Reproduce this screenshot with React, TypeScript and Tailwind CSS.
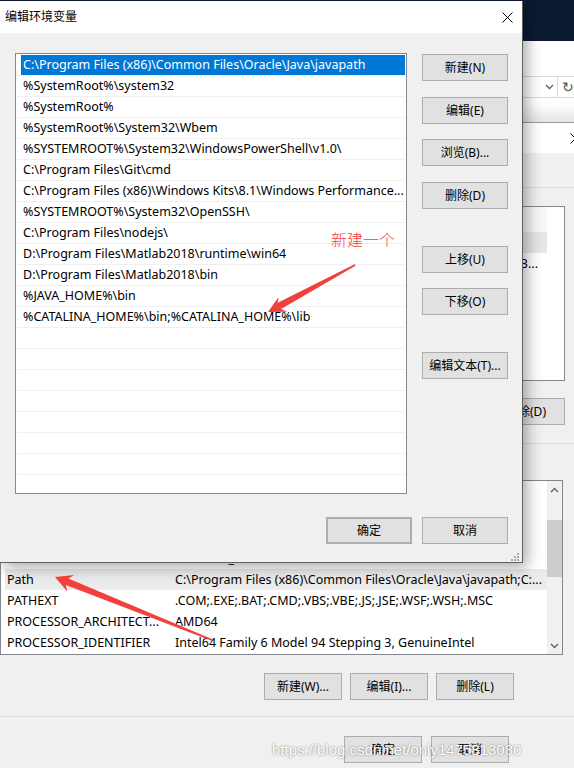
import React from 'react';

const pathItems = [
  'C:\\Program Files (x86)\\Common Files\\Oracle\\Java\\javapath',
  '%SystemRoot%\\system32',
  '%SystemRoot%',
  '%SystemRoot%\\System32\\Wbem',
  '%SYSTEMROOT%\\System32\\WindowsPowerShell\\v1.0\\',
  'C:\\Program Files\\Git\\cmd',
  'C:\\Program Files (x86)\\Windows Kits\\8.1\\Windows Performance...',
  '%SYSTEMROOT%\\System32\\OpenSSH\\',
  'C:\\Program Files\\nodejs\\',
  'D:\\Program Files\\Matlab2018\\runtime\\win64',
  'D:\\Program Files\\Matlab2018\\bin',
  '%JAVA_HOME%\\bin',
  '%CATALINA_HOME%\\bin;%CATALINA_HOME%\\lib',
];

const sysVars = [
  { name: 'ComSpec', value: 'C:\\Windows\\system32\\cmd.exe' },
  { name: 'NUMBER_OF_PROCESSORS', value: '4' },
  { name: 'OS', value: 'Windows_NT' },
  { name: 'Path', value: 'C:\\Program Files (x86)\\Common Files\\Oracle\\Java\\javapath;C:...', active: true },
  { name: 'PATHEXT', value: '.COM;.EXE;.BAT;.CMD;.VBS;.VBE;.JS;.JSE;.WSF;.WSH;.MSC' },
  { name: 'PROCESSOR_ARCHITECT...', value: 'AMD64' },
  { name: 'PROCESSOR_IDENTIFIER', value: 'Intel64 Family 6 Model 94 Stepping 3, GenuineIntel' },
];

function Btn({ children, className = '' }: { children: React.ReactNode; className?: string }) {
  return (
    <div
      className={`flex h-[27px] shrink-0 items-center justify-center border border-[#adadad] bg-[#e1e1e1] text-[12px] text-black ${className}`}
    >
      {children}
    </div>
  );
}

function CloseX() {
  return (
    <svg width="11" height="11" viewBox="0 0 11 11">
      <path d="M0.5 0.5 L10.5 10.5 M10.5 0.5 L0.5 10.5" stroke="#000" strokeWidth="1" />
    </svg>
  );
}

function Chevron({ up = false }: { up?: boolean }) {
  return (
    <svg width="9" height="6" viewBox="0 0 9 6">
      <path d={up ? 'M1 5 L4.5 1.5 L8 5' : 'M1 1 L4.5 4.5 L8 1'} stroke="#606060" strokeWidth="1.3" fill="none" />
    </svg>
  );
}

function Grip() {
  return (
    <svg width="9" height="9" viewBox="0 0 9 9">
      <g fill="#a8a8a8">
        <rect x="7" y="1" width="2" height="2" />
        <rect x="4" y="4" width="2" height="2" />
        <rect x="7" y="4" width="2" height="2" />
        <rect x="1" y="7" width="2" height="2" />
        <rect x="4" y="7" width="2" height="2" />
        <rect x="7" y="7" width="2" height="2" />
      </g>
    </svg>
  );
}

function EnvWindow() {
  return (
    <div className="absolute left-0 top-[122px] flex h-[646px] w-[600px] flex-col border-t border-[#9a9a9a] bg-[#f0f0f0] shadow-[0_-8px_14px_rgba(0,0,0,0.12)]">
      <div className="flex h-[30px] shrink-0 items-center justify-end bg-white pr-[19px]">
        <CloseX />
      </div>
      <div className="mt-[34px] h-px bg-[#dcdcdc]" />
      <div className="mr-[35px] mt-[18px] flex h-[175px] shrink-0 flex-col border border-[#828790] bg-white text-[12.5px]">
        <div className="h-[25px] w-[546px] bg-[#f7f7f7]" />
        <div className="h-[21px] w-[546px] bg-[#e6e6e6]" />
        <div className="flex h-[21px] items-center justify-end pr-[26px] pt-[1px]">
          <span className="whitespace-nowrap">Python3...</span>
        </div>
      </div>
      <div className="mt-[17px] flex justify-end gap-[8px] pr-[35px]">
        <Btn className="w-[78px]">新建(N)...</Btn>
        <Btn className="w-[78px]">编辑(E)...</Btn>
        <Btn className="w-[78px]">删除(D)</Btn>
      </div>
      <div className="mt-[18px] h-px bg-[#dcdcdc]" />
      <div className="mr-[37px] mt-[36px] flex h-[175px] shrink-0 border border-[#828790] bg-white text-[12.5px]">
        <div className="flex flex-1 flex-col overflow-hidden">
          <div className="h-[25px] shrink-0" />
          {sysVars.map((v) => (
            <div
              key={v.name}
              className={`ml-[4px] flex h-[21px] shrink-0 items-center pt-[1px] ${v.active ? 'bg-[#ebebeb]' : ''}`}
            >
              <div className="w-[170px] shrink-0 whitespace-nowrap pl-[2px]">{v.name}</div>
              <div className="flex-1 whitespace-nowrap">{v.value}</div>
            </div>
          ))}
        </div>
        <div className="flex w-[15px] shrink-0 flex-col items-center bg-[#f0f0f0]">
          <div className="flex h-[17px] items-center">
            <Chevron up />
          </div>
          <div className="mt-[22px] h-[57px] w-[15px] bg-[#cdcdcd]" />
          <div className="mt-auto flex h-[17px] items-center">
            <Chevron />
          </div>
        </div>
      </div>
      <div className="mt-[18px] flex justify-end gap-[8px] pr-[86px]">
        <Btn className="w-[78px]">新建(W)...</Btn>
        <Btn className="w-[78px]">编辑(I)...</Btn>
        <Btn className="w-[78px]">删除(L)</Btn>
      </div>
      <div className="mt-[16px] h-px bg-[#dcdcdc]" />
      <div className="mt-[19px] flex justify-end gap-[9px] pr-[91px]">
        <Btn className="w-[78px]">确定</Btn>
        <Btn className="w-[78px]">取消</Btn>
      </div>
    </div>
  );
}

function Explorer() {
  return (
    <div className="absolute left-0 top-[41px] h-[81px] w-[600px] bg-white">
      <div className="mt-[35px] flex h-[22px] w-[578px] items-stretch justify-end border border-[#d9d9d9]">
        <div className="flex w-[16px] items-center justify-center">
          <Chevron />
        </div>
        <div className="flex w-[20px] items-center justify-center border-l border-[#d9d9d9] text-[14px] leading-none text-[#555]">
          ↻
        </div>
      </div>
    </div>
  );
}

function EditDialog() {
  const rows = Array.from({ length: 21 }, (_, i) => pathItems[i] ?? '');
  return (
    <div className="absolute left-0 top-[1px] flex h-[562px] w-[523px] flex-col border-b border-r border-[#5f5f5f] bg-[#f0f0f0] shadow-[4px_4px_14px_rgba(0,0,0,0.35)]">
      <div className="flex h-[32px] shrink-0 items-center justify-between bg-white pl-[5px] pr-[9px]">
        <span className="text-[12px]">编辑环境变量</span>
        <CloseX />
      </div>
      <div className="flex pl-[15px] pt-[20px]">
        <div className="flex h-[441px] w-[392px] shrink-0 flex-col overflow-hidden border border-[#828790] bg-white pt-[1px] text-[12.5px]">
          {rows.map((t, i) => (
            <div key={i} className="ml-[1px] h-[21px] w-[388px] shrink-0 border-b border-[#f0f0f0]">
              <div
                className={`ml-[4px] flex h-[20px] items-center pl-[2px] pt-[1px] ${
                  i === 0 ? 'bg-[#0078d7] text-white' : 'text-black'
                }`}
              >
                <span className="whitespace-nowrap">{t}</span>
              </div>
            </div>
          ))}
        </div>
        <div className="ml-[15px] flex flex-col pt-[1px]">
          <Btn className="w-[86px]">新建(N)</Btn>
          <Btn className="mt-[16px] w-[86px]">编辑(E)</Btn>
          <Btn className="mt-[15px] w-[86px]">浏览(B)...</Btn>
          <Btn className="mt-[16px] w-[86px]">删除(D)</Btn>
          <Btn className="mt-[37px] w-[86px]">上移(U)</Btn>
          <Btn className="mt-[15px] w-[86px]">下移(O)</Btn>
          <Btn className="mt-[37px] w-[86px]">编辑文本(T)...</Btn>
        </div>
      </div>
      <div className="mt-[23px] flex justify-end gap-[10px] pr-[14px]">
        <Btn className="w-[86px] border-2 border-[#0078d7]">确定</Btn>
        <Btn className="w-[86px]">取消</Btn>
      </div>
      <div className="mt-auto flex justify-end pb-[1px] pr-[3px]">
        <Grip />
      </div>
    </div>
  );
}

function Annotations() {
  return (
    <>
      <div className="absolute left-[331px] top-[232px] text-[16px] font-light leading-none text-[#f2403c]">新建一个</div>
      <svg className="pointer-events-none absolute left-0 top-0" width="574" height="768" viewBox="0 0 574 768">
        <polygon
          fill="#f2403c"
          points="268,312 278.6,297 277.7,302.7 354.7,264.3 355.5,265.7 281.1,308.9 287.2,311.8"
        />
        <polygon
          fill="#f2403c"
          points="55,577 74.2,574.9 68.4,578.6 212.4,639.2 211.6,640.8 65.8,585 67.4,591.7"
        />
      </svg>
      <div className="absolute left-[272px] top-[739px] whitespace-nowrap font-['Liberation_Sans',Arial,sans-serif] text-[15px] text-white [text-shadow:0_0_2px_rgba(0,0,0,0.55)]">
        https://blog.csdn.net/only1475813080
      </div>
    </>
  );
}

export default function App() {
  return (
    <div className="relative h-[768px] w-[574px] overflow-hidden bg-[#0b1a31] font-['Noto_Sans','Noto_Sans_CJK_SC',sans-serif] text-[12px] text-black">
      <Explorer />
      <EnvWindow />
      <EditDialog />
      <Annotations />
    </div>
  );
}
